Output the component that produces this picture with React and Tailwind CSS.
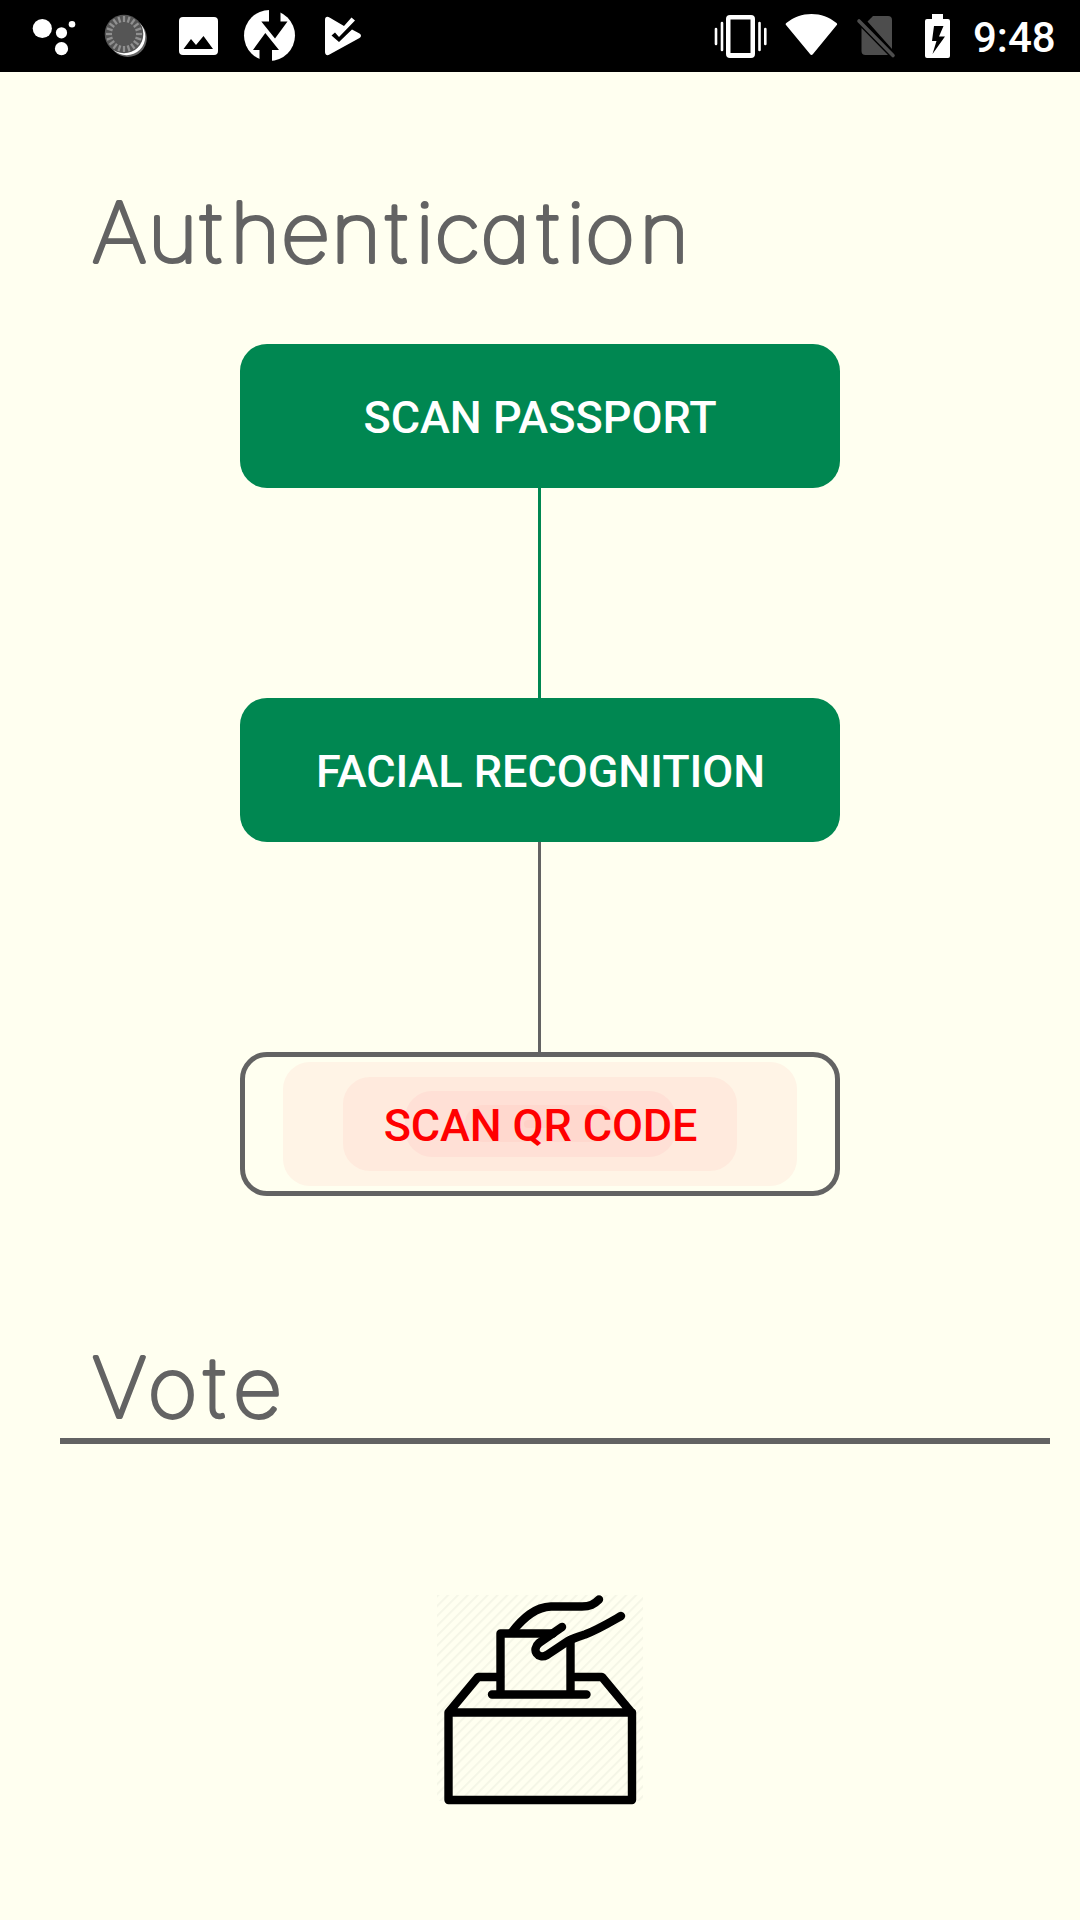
const stage = "flex h-[144px] w-[600px] items-center justify-center rounded-[27px] font-['Roboto'] text-[45px] leading-none font-medium";

function NotificationIcons() {
  const ticks = Array.from({ length: 20 }, (_, i) => i * 18);
  return (
    <svg className="h-[72px] w-[380px]" viewBox="0 0 380 72" fill="#fff">
      <circle cx="42.3" cy="28.5" r="9.6" />
      <circle cx="61.5" cy="32.8" r="5.6" />
      <circle cx="72" cy="24.3" r="3.3" />
      <circle cx="61.5" cy="48.7" r="6.6" />
      <circle cx="127.800" cy="38" r="19" fill="#666" />
      <circle cx="126.500" cy="36.500" r="18.800" />
      <circle cx="124" cy="34" r="19.300" fill="#555" />
      <g stroke="#909090" strokeWidth="2.300">
        {ticks.map((a) => (
          <line key={a} x1="124" y1="16" x2="124" y2="22" transform={`rotate(${a} 124 34)`} />
        ))}
      </g>
      <path fillRule="evenodd" d="M183 17h31a4 4 0 0 1 4 4v30a4 4 0 0 1-4 4h-31a4 4 0 0 1-4-4V21a4 4 0 0 1 4-4ZM183.500 49H213L203.500 36l-7.500 9-5-6Z" />
      <circle cx="269.500" cy="35.500" r="25.500" />
      <path fill="#000" d="M269 8h11.500v13.500h7L275 38.500 261.300 21.500H269ZM272 63h-12.500V50H253l12.300-17L279 50h-7Z" />
      <path d="M325 20c0-3 2-4 4.500-2.600L344 26l7.500-8.500 3.500 3L339 37l-4-4.500-3.500 3L339 42l13-12.500 7.500 4c2 1 2 3.500 0 4.600l-30 16.500c-2.500 1.400-4.500.2-4.500-2.600Z" />
    </svg>
  );
}

function SystemIcons() {
  return (
    <svg className="h-[72px] w-[260px]" viewBox="700 0 260 72" fill="#fff">
      <path fillRule="evenodd" d="M730 15h21a4 4 0 0 1 4 4v35a4 4 0 0 1-4 4h-21a4 4 0 0 1-4-4V19a4 4 0 0 1 4-4ZM730.500 19.500v33.500H750.500V19.500Z" />
      <path stroke="#fff" strokeWidth="2.600" strokeLinecap="round" d="M716 29v15M722 23v27M759.500 23v27M765.300 29v15" />
      <path d="M786 25c-.6-.7-.4-1.500.3-2C794 17 802 14 811.500 14s17.500 3 25 9c.7.500.9 1.300.3 2L813 54c-.9 1.200-2.200 1.200-3 0Z" />
      <path fill="#4d4d4d" d="M873 16h15a4 4 0 0 1 4 4v29L867.500 21.500ZM861.500 28 888 55H865.500a4 4 0 0 1-4-4Z" />
      <path stroke="#4d4d4d" strokeWidth="3.600" strokeLinecap="round" d="M859 21 893 55.500" />
      <path fillRule="evenodd" d="M932 14h11v5h5a2 2 0 0 1 2 2v35a2 2 0 0 1-2 2h-21a2 2 0 0 1-2-2V21a2 2 0 0 1 2-2h5ZM934 26l-2 15h4.500L932.500 54 945 36.500h-6L943.500 26Z" />
    </svg>
  );
}

function BallotBox() {
  return (
    <svg className="h-[216px] w-[216px]" viewBox="0 0 216 216" fill="none">
      <defs>
        <pattern id="hatch" width="7" height="7" patternUnits="userSpaceOnUse" patternTransform="rotate(45)">
          <rect width="1.800" height="7" fill="#f4f5e6" />
        </pattern>
      </defs>
      <path fill="url(#hatch)" d="M5 5h206v206H5Z" />
      <g stroke="#000" strokeWidth="8.400" strokeLinejoin="round" strokeLinecap="round">
        <path d="M16.500 122.500h183.500v87.500H16.500ZM16.500 122.500 46 87h22M143 87h27l29.500 35.500" />
        <path d="M60 104.500h94.500M68.500 104V43.500H121M138.500 104V50" />
        <path d="M80 42C91 28 103 17 119 16.500h31c8 0 12-2 17-7M189 26c-14 8-24 14-36 18.500-6 2-11 3.500-17 6.500L115 65c-9 5-16-5-8-12L130 37" />
      </g>
    </svg>
  );
}

// Thin lettering with a round-joined outline, which gives the strokes soft ends.
function RoundedText({ children, dx }) {
  return (
    <svg className="h-[94px] w-[620px] overflow-visible" fill="#636363" stroke="#636363" strokeWidth="3.900" strokeLinejoin="round">
      <text
        y="74"
        dx={dx}
        transform="scale(1.03 1)"
        className="font-['Inter'] text-[83px] font-thin tracking-[3.600px] [font-feature-settings:'cv11'] [font-kerning:none] [font-optical-sizing:none]"
      >
        {children}
      </text>
    </svg>
  );
}

export default function App() {
  return (
    <main className="flex h-[1920px] w-[1080px] flex-col overflow-hidden bg-[#fffff0]">
      <header className="flex h-[72px] shrink-0 items-center bg-black text-white">
        <NotificationIcons />
        <div className="w-[320px]" />
        <SystemIcons />
        <span className="ml-[13px] pt-[4px] font-['Roboto'] text-[42px] leading-none font-medium">9:48</span>
      </header>
      <h1 className="mt-[116px] ml-[92px] h-[156px] shrink-0">
        <RoundedText dx="0 -2.6 -.5 5 -2.8 -2.2 1.2 4.9 -3.2 -3.2 3.7 4.5 -3.3 .7">Authentication</RoundedText>
      </h1>
      <section className="flex shrink-0 flex-col items-center">
        <button className={`${stage} bg-[#008751] pt-[2px] text-white`}>SCAN PASSPORT</button>
        <div className="mr-[2px] h-[210px] w-[3px] bg-[#008751]" />
        <button className={`${stage} bg-[#008751] pt-[2px] pl-[1px] tracking-[-0.05px] text-white`}>FACIAL RECOGNITION</button>
        <div className="mr-[2px] h-[210px] w-[3px] bg-[#636363]" />
        <button className={`${stage} relative border-[5px] border-[#636363] pt-[2px] pl-[1px] tracking-[-0.15px] text-[#ff0000]`}>
          <span className="absolute top-[5px] left-[38px] h-[124px] w-[514px] rounded-[27px] bg-[#fff4e6]" />
          <span className="absolute top-[20px] left-[98px] h-[94px] w-[394px] rounded-[27px] bg-[#ffeadd]" />
          <span className="absolute top-[34px] left-[160px] h-[66px] w-[271px] rounded-[27px] bg-[#ffe0d6]" />
          <span className="absolute top-[48px] left-[220px] h-[37px] w-[150px] rounded-[18px] bg-[#ffd8ce]" />
          <span className="absolute top-[63px] left-[279px] h-[8px] w-[30px] rounded-[4px] bg-[#ffd0c6]" />
          <span className="relative">SCAN QR CODE</span>
        </button>
      </section>
      <h2 className="mt-[147px] ml-[92px] h-[95px] shrink-0">
        <RoundedText dx="0 -2.6 3.3 4.2">Vote</RoundedText>
      </h2>
      <div className="ml-[60px] h-[6px] w-[990px] shrink-0 bg-[#636363]" />
      <div className="mt-[146px] flex justify-center">
        <BallotBox />
      </div>
    </main>
  );
}
